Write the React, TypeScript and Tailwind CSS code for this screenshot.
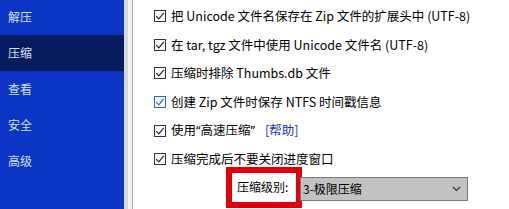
import React from 'react';

const font = { fontFamily: '"Noto Sans CJK SC", "Noto Sans", sans-serif' };
const latin = { fontFamily: '"Noto Sans", sans-serif' };

const navItems = ['解压', '压缩', '查看', '安全', '高级'];

function Check({ hot }: { hot?: boolean }) {
  return (
    <span
      className={`flex h-[12px] w-[12px] shrink-0 items-center justify-center border bg-white ${
        hot ? 'border-[#2c63c8]' : 'border-[#333]'
      }`}
    >
      <svg width="10" height="10" viewBox="0 0 10 10">
        <path d="M1.2 5.2 L3.8 7.8 L8.8 1.8" fill="none" stroke={hot ? '#2c63c8' : '#222'} strokeWidth="1.2" />
      </svg>
    </span>
  );
}

function Row({ children, hot }: { children: React.ReactNode; hot?: boolean }) {
  return (
    <div className="flex h-[28.6px] shrink-0 items-center gap-[5px] text-[12.5px] text-black">
      <Check hot={hot} />
      <span className="whitespace-pre">{children}</span>
    </div>
  );
}

export default function App() {
  return (
    <div className="flex h-[209px] w-[509px] overflow-hidden bg-white" style={font}>
      <div className="flex w-[124px] shrink-0 flex-col bg-[#0a35c4]">
        {navItems.map((item, i) => (
          <div
            key={item}
            className={`flex h-[36px] shrink-0 items-center pl-[8px] text-[12px] text-[#d6e2ff] ${
              item === '压缩' ? 'bg-[#061a5c]' : ''
            } ${i === 0 ? '-mt-px' : ''}`}
          >
            {item}
          </div>
        ))}
      </div>
      <div className="w-[4px] shrink-0 bg-[#d8d8d8]" />
      <div className="w-[4px] shrink-0 bg-[#f2f2f2]" />
      <div className="w-px shrink-0 bg-[#a8a8a8]" />
      <div className="flex flex-1 flex-col pl-[21px] pt-[2px]">
        <Row>把 Unicode 文件名保存在 Zip 文件的扩展头中 (UTF-8)</Row>
        <Row>在 tar, tgz 文件中使用 Unicode 文件名 (UTF-8)</Row>
        <Row>压缩时排除 Thumbs.db 文件</Row>
        <Row hot>创建 Zip 文件时保存 NTFS 时间戳信息</Row>
        <Row>
          使用<span style={latin}>“</span>高速压缩<span style={latin}>”</span>
          <span className="ml-[10px] text-[#1a2fb0]">[帮助]</span>
        </Row>
        <Row>压缩完成后不要关闭进度窗口</Row>
        <div className="-mt-[7px] flex shrink-0 items-start pl-[72px]">
          <div className="flex h-[41px] w-[76px] shrink-0 items-center border-[6px] border-[#e3000b] bg-white pl-[5px] text-[12px] text-black">
            压缩级别:
          </div>
          <div className="-ml-[2px] mt-[10px] flex h-[24px] w-[168px] shrink-0 items-center justify-between border border-[#7a7a7a] bg-[#c2c2c2] pl-[2px] pr-[6px] text-[12px] text-black">
            <span>3-极限压缩</span>
            <svg width="9" height="6" viewBox="0 0 9 6">
              <path d="M1 1 L4.5 4.5 L8 1" fill="none" stroke="#333" strokeWidth="1.2" />
            </svg>
          </div>
        </div>
      </div>
    </div>
  );
}
